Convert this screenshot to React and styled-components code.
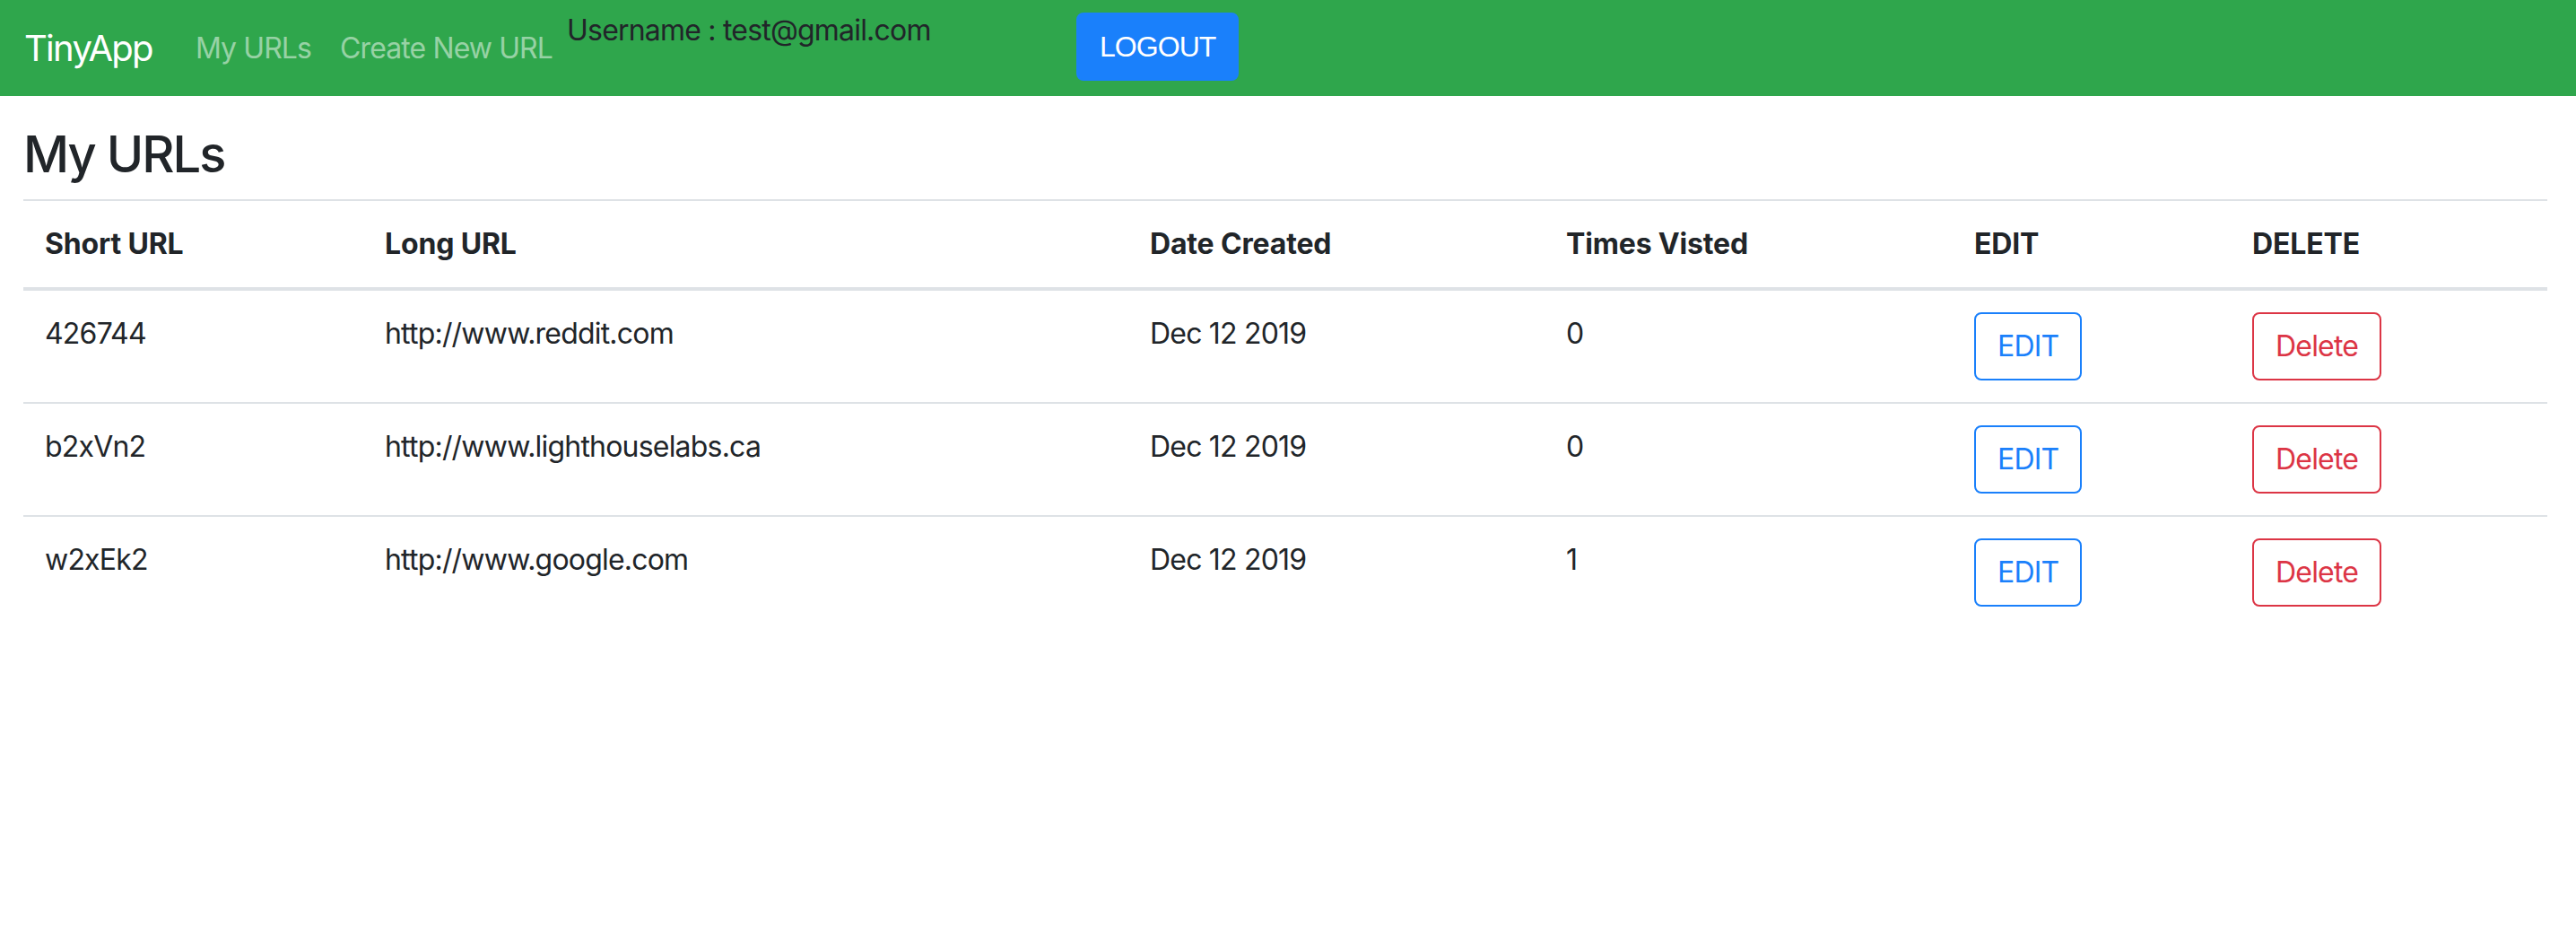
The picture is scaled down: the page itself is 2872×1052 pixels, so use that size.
import React from "react";
import styled, { createGlobalStyle } from "styled-components";

const urls = [
  { id: "426744", longURL: "http://www.reddit.com", date: "Dec 12 2019", visits: 0 },
  { id: "b2xVn2", longURL: "http://www.lighthouselabs.ca", date: "Dec 12 2019", visits: 0 },
  { id: "w2xEk2", longURL: "http://www.google.com", date: "Dec 12 2019", visits: 1 },
];

const columns = [
  { label: "Short URL", width: 379 },
  { label: "Long URL", width: 853 },
  { label: "Date Created", width: 464 },
  { label: "Times Visted", width: 455 },
  { label: "EDIT", width: 310 },
  { label: "DELETE", width: 353 },
];

function App() {
  return (
    <>
      <GlobalStyle />
      <Navbar>
        <Brand href="#">TinyApp</Brand>
        <NavLink href="#">My URLs</NavLink>
        <NavLink href="#">Create New URL</NavLink>
        <Username>Username : test@gmail.com</Username>
        <LogoutButton>LOGOUT</LogoutButton>
      </Navbar>
      <Main>
        <Title>My URLs</Title>
        <Table>
          <colgroup>
            {columns.map((c) => (
              <col key={c.label} style={{ width: c.width }} />
            ))}
          </colgroup>
          <thead>
            <tr>
              {columns.map((c) => (
                <Th key={c.label}>{c.label}</Th>
              ))}
            </tr>
          </thead>
          <tbody>
            {urls.map((u) => (
              <tr key={u.id}>
                <Td>{u.id}</Td>
                <Td>{u.longURL}</Td>
                <Td>{u.date}</Td>
                <Td>{u.visits}</Td>
                <Td>
                  <OutlineButton color="#1a80fb">EDIT</OutlineButton>
                </Td>
                <Td>
                  <OutlineButton color="#dc3545">Delete</OutlineButton>
                </Td>
              </tr>
            ))}
          </tbody>
        </Table>
      </Main>
    </>
  );
}

export default App;

const GlobalStyle = createGlobalStyle`
  body {
    margin: 0;
    background: #fff;
    color: #212529;
    font-family: Inter, "Noto Sans", sans-serif;
    font-size: 32px;
    line-height: 48px;
    letter-spacing: -0.025em;
  }
  * {
    box-sizing: border-box;
  }
`;

const Navbar = styled.nav`
  display: flex;
  align-items: center;
  height: 107px;
  padding: 0 32px 0 27px;
  background-color: #2fa64c;
`;

const Brand = styled.a`
  font-size: 40px;
  line-height: 60px;
  letter-spacing: -0.043em;
  color: #fff;
  text-decoration: none;
  margin-right: 32px;
`;

const NavLink = styled.a`
  padding: 0 16px;
  font-size: 32px;
  letter-spacing: -0.028em;
  color: rgba(255, 255, 255, 0.5);
  text-decoration: none;
`;

const Username = styled.div`
  align-self: flex-start;
  margin-top: 10px;
  width: 568px;
  flex: none;
  color: #212529;
`;

const LogoutButton = styled.button`
  align-self: flex-start;
  margin-top: 14px;
  padding: 12px 24px;
  border: 2px solid #1a80fb;
  border-radius: 8px;
  background-color: #1a80fb;
  color: #fff;
  font-family: "Liberation Sans", Arial, sans-serif;
  font-size: 32px;
  line-height: 48px;
  letter-spacing: -0.03em;
`;

const Main = styled.main`
  padding: 32px 32px 0 26px;
`;

const Title = styled.h3`
  margin: 0 0 16px;
  font-size: 56px;
  font-weight: 500;
  line-height: 67px;
  letter-spacing: -0.035em;
`;

const Table = styled.table`
  width: 100%;
  table-layout: fixed;
  border-collapse: separate;
  border-spacing: 0;
`;

const Th = styled.th`
  padding: 24px;
  text-align: left;
  vertical-align: bottom;
  font-weight: 700;
  letter-spacing: -0.005em;
  border-top: 2px solid #dee2e6;
  border-bottom: 2px solid #dee2e6;
`;

const Td = styled.td`
  padding: 24px;
  vertical-align: top;
  border-top: 2px solid #dee2e6;
`;

const OutlineButton = styled.button`
  display: inline-block;
  padding: 12px 24px;
  border: 2px solid ${(p) => p.color};
  border-radius: 8px;
  background: transparent;
  color: ${(p) => p.color};
  font-family: Inter, "Noto Sans", sans-serif;
  font-size: 32px;
  line-height: 48px;
  letter-spacing: -0.025em;
`;
